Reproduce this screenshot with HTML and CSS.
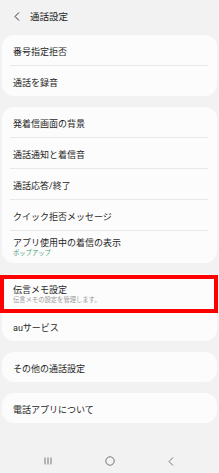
FILE: index.html
```html
<!DOCTYPE html>
<html lang="ja">
<head>
<meta charset="utf-8">
<link rel="stylesheet" href="styles.css">
</head>
<body>
<div class="screen">
  <header class="header">
    <svg class="back" width="6" height="9" viewBox="0 0 6 9"><path d="M5 0.5 L1 4.5 L5 8.5" fill="none" stroke="#333" stroke-width="1"/></svg>
    <span class="title">通話設定</span>
  </header>

  <section class="card">
    <div class="row">番号指定拒否</div>
    <div class="divider"></div>
    <div class="row">通話を録音</div>
  </section>

  <section class="card">
    <div class="row">発着信画面の背景</div>
    <div class="divider"></div>
    <div class="row">通話通知と着信音</div>
    <div class="divider"></div>
    <div class="row">通話応答/終了</div>
    <div class="divider"></div>
    <div class="row">クイック拒否メッセージ</div>
    <div class="divider"></div>
    <div class="row two">
      <span class="main">アプリ使用中の着信の表示</span>
      <span class="sub green">ポップアップ</span>
    </div>
  </section>

  <section class="card highlight-wrap">
    <div class="row memo">
      <span class="main">伝言メモ設定</span>
      <span class="sub">伝言メモの設定を管理します。</span>
    </div>
    <div class="row au">auサービス</div>
    <div class="highlight"></div>
  </section>

  <section class="card">
    <div class="row">その他の通話設定</div>
  </section>

  <section class="card">
    <div class="row">電話アプリについて</div>
  </section>

  <nav class="navbar">
    <svg width="8" height="8" viewBox="0 0 8 8"><path d="M1 0.5 V7.5 M4 0.5 V7.5 M7 0.5 V7.5" stroke="#777" stroke-width="1"/></svg>
    <svg width="10" height="10" viewBox="0 0 10 10"><circle cx="5" cy="5" r="4.2" fill="none" stroke="#777" stroke-width="1"/></svg>
    <svg width="6" height="9" viewBox="0 0 6 9"><path d="M5 0.5 L1 4.5 L5 8.5" fill="none" stroke="#777" stroke-width="1"/></svg>
  </nav>
</div>
</body>
</html>
```

FILE: styles.css
```css
* { box-sizing: border-box; margin: 0; padding: 0; }
html, body { width: 219px; height: 473px; overflow: hidden; }
body {
  background: #f2f2f2;
  font-family: Roboto, "Noto Sans CJK JP", sans-serif;
  color: #1f1f1f;
}
.screen {
  display: flex;
  flex-direction: column;
  height: 473px;
  position: relative;
}
.header {
  height: 35px;
  display: flex;
  align-items: center;
  padding: 0 0 3px 14px;
}
.back { margin-right: 10px; }
.title { font-size: 9.5px; color: #222; }
.card {
  background: #fcfcfc;
  margin: 0 2px 11px 2px;
  border-radius: 12px;
  display: flex;
  flex-direction: column;
}
.row {
  height: 30px;
  display: flex;
  align-items: center;
  padding: 3px 0 0 11px;
  font-size: 9px;
}
.row.two {
  height: 32px;
  flex-direction: column;
  align-items: flex-start;
  justify-content: center;
  padding-top: 1px;
  padding-bottom: 0;
}
.row.memo {
  height: 38px;
  flex-direction: column;
  align-items: flex-start;
  justify-content: center;
  padding-top: 4px;
}
.row.au { height: 29px; padding-top: 2px; }
.main { font-size: 9px; line-height: 11px; }
.sub { font-size: 6.3px; line-height: 9px; color: #9a9a9a; }
.sub.green { color: #3f9e76; }
.divider {
  height: 1px;
  background: #e8e8e8;
  margin: 0 9px 0 8px;
}
.highlight-wrap { position: relative; }
.highlight {
  position: absolute;
  left: -2px;
  top: 1px;
  width: 218px;
  height: 38px;
  border: 4px solid #ff0000;
}
.navbar {
  margin-top: auto;
  height: 24px;
  display: flex;
  align-items: center;
  justify-content: space-between;
  padding: 0 45px 0 44px;
}
```
